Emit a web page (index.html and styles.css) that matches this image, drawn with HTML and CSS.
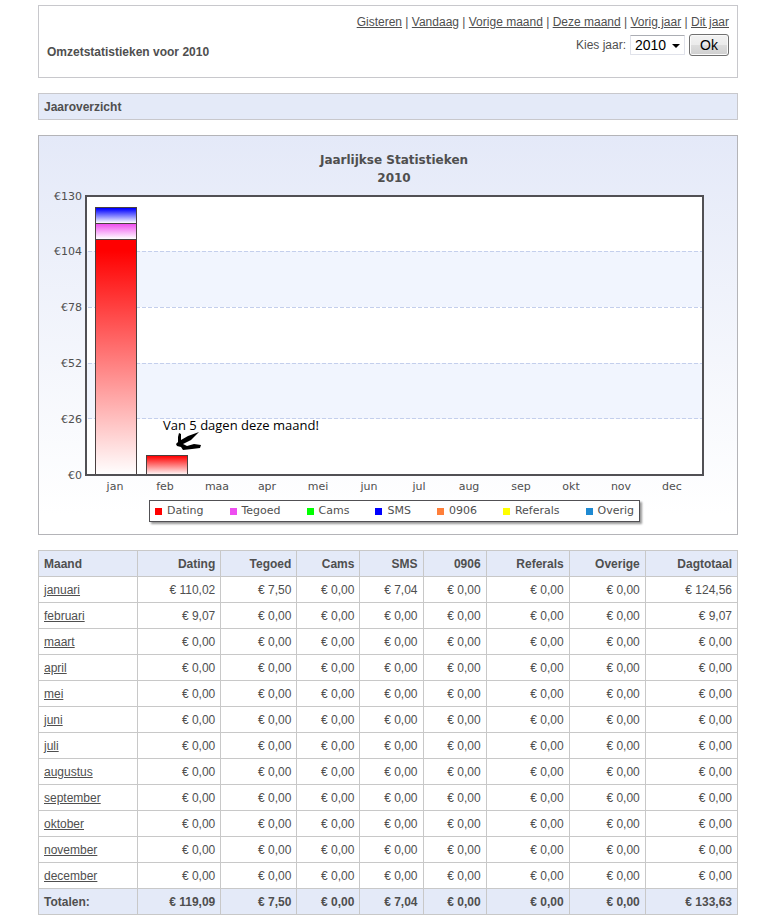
FILE: index.html
```html
<!DOCTYPE html>
<html lang="nl">
<head>
    <meta charset="UTF-8">
    <meta name="viewport" content="width=device-width, initial-scale=1.0">
    <title>Omzetstatistieken</title>
    <link rel="stylesheet" href="styles.css">
</head>
<body>
    <div class="page">
        <header class="top">
            <nav class="periods">
                <a href="#">Gisteren</a> | <a href="#">Vandaag</a> | <a href="#">Vorige maand</a> | <a href="#">Deze maand</a> | <a href="#">Vorig jaar</a> | <a href="#">Dit jaar</a>
            </nav>
            <div class="top-row">
                <h1>Omzetstatistieken voor 2010</h1>
                <form class="year-form">
                    <label for="year">Kies jaar:</label>
                    <span class="select-wrap">
                        <select id="year">
                            <option>2009</option>
                            <option selected>2010</option>
                        </select>
                        <svg class="caret" width="8" height="4" viewBox="0 0 8 4" aria-hidden="true"><path d="M0 0h8L4 4z"/></svg>
                    </span>
                    <button type="button">Ok</button>
                </form>
            </div>
        </header>

        <h2 class="section-title">Jaaroverzicht</h2>

        <section class="chart">
            <h3>Jaarlijkse Statistieken<br>2010</h3>
            <svg class="plot" viewBox="0 0 698 308">
                <defs>
                    <linearGradient id="red" x2="0" y2="1"><stop offset="5%" stop-color="#f00"/><stop offset="1" stop-color="#fff"/></linearGradient>
                    <linearGradient id="pink" x2="0" y2="1"><stop offset="0" stop-color="#ee44ee"/><stop offset="1" stop-color="#fff"/></linearGradient>
                    <linearGradient id="blue" x2="0" y2="1"><stop offset="10%" stop-color="#00f"/><stop offset="1" stop-color="#fff"/></linearGradient>
                </defs>
                <rect class="plot-bg" x="47" y="9" width="617" height="279"/>
                <rect class="band" x="47" y="64" width="617" height="56"/>
                <rect class="band" x="47" y="176" width="617" height="56"/>
                <g class="grid">
                    <path d="M49 64H663M49 120H663M49 176H663M49 231H663"/>
                </g>
                <g class="bars">
                    <rect x="56" y="20" width="41" height="16" fill="url(#blue)"/>
                    <rect x="56" y="36" width="41" height="16" fill="url(#pink)"/>
                    <rect x="56" y="52" width="41" height="236" fill="url(#red)"/>
                    <rect x="107" y="268" width="41" height="20" fill="url(#red)"/>
                </g>
                <rect class="frame" x="47" y="9" width="617" height="279"/>
                <g class="y-labels">
                    <text x="43" y="13">€130</text>
                    <text x="43" y="68">€104</text>
                    <text x="43" y="124">€78</text>
                    <text x="43" y="180">€52</text>
                    <text x="43" y="236">€26</text>
                    <text x="43" y="292">€0</text>
                </g>
                <g class="x-labels">
                    <text x="76" y="303">jan</text>
                    <text x="126" y="303">feb</text>
                    <text x="178" y="303">maa</text>
                    <text x="228" y="303">apr</text>
                    <text x="279" y="303">mei</text>
                    <text x="330" y="303">jun</text>
                    <text x="380" y="303">jul</text>
                    <text x="430" y="303">aug</text>
                    <text x="482" y="303">sep</text>
                    <text x="532" y="303">okt</text>
                    <text x="582" y="303">nov</text>
                    <text x="633" y="303">dec</text>
                </g>
                <text class="note" x="124" y="243">Van 5 dagen deze maand!</text>
                <path class="arrow" d="M160 245L152 253L144 257L148 259L155 257L162 258L161 261L153 262L144 263L142 260L138 259L137 257L139 255L139 250L140 246L142 247L142 253L149 249Z"/>
            </svg>
            <ul class="legend">
                <li><i class="dating"></i>Dating</li>
                <li><i class="tegoed"></i>Tegoed</li>
                <li><i class="cams"></i>Cams</li>
                <li><i class="sms"></i>SMS</li>
                <li><i class="n0906"></i>0906</li>
                <li><i class="referals"></i>Referals</li>
                <li><i class="overig"></i>Overig</li>
            </ul>
        </section>

        <table class="stats">
            <colgroup>
                <col class="c-month"><col class="c-wide"><col class="c-mid"><col class="c-small"><col class="c-small"><col class="c-small"><col class="c-wide"><col class="c-mid"><col class="c-total">
            </colgroup>
            <thead>
                <tr><th>Maand</th><th>Dating</th><th>Tegoed</th><th>Cams</th><th>SMS</th><th>0906</th><th>Referals</th><th>Overige</th><th>Dagtotaal</th></tr>
            </thead>
            <tbody>
                <tr><td><a href="#">januari</a></td><td>€ 110,02</td><td>€ 7,50</td><td>€ 0,00</td><td>€ 7,04</td><td>€ 0,00</td><td>€ 0,00</td><td>€ 0,00</td><td>€ 124,56</td></tr>
                <tr><td><a href="#">februari</a></td><td>€ 9,07</td><td>€ 0,00</td><td>€ 0,00</td><td>€ 0,00</td><td>€ 0,00</td><td>€ 0,00</td><td>€ 0,00</td><td>€ 9,07</td></tr>
                <tr><td><a href="#">maart</a></td><td>€ 0,00</td><td>€ 0,00</td><td>€ 0,00</td><td>€ 0,00</td><td>€ 0,00</td><td>€ 0,00</td><td>€ 0,00</td><td>€ 0,00</td></tr>
                <tr><td><a href="#">april</a></td><td>€ 0,00</td><td>€ 0,00</td><td>€ 0,00</td><td>€ 0,00</td><td>€ 0,00</td><td>€ 0,00</td><td>€ 0,00</td><td>€ 0,00</td></tr>
                <tr><td><a href="#">mei</a></td><td>€ 0,00</td><td>€ 0,00</td><td>€ 0,00</td><td>€ 0,00</td><td>€ 0,00</td><td>€ 0,00</td><td>€ 0,00</td><td>€ 0,00</td></tr>
                <tr><td><a href="#">juni</a></td><td>€ 0,00</td><td>€ 0,00</td><td>€ 0,00</td><td>€ 0,00</td><td>€ 0,00</td><td>€ 0,00</td><td>€ 0,00</td><td>€ 0,00</td></tr>
                <tr><td><a href="#">juli</a></td><td>€ 0,00</td><td>€ 0,00</td><td>€ 0,00</td><td>€ 0,00</td><td>€ 0,00</td><td>€ 0,00</td><td>€ 0,00</td><td>€ 0,00</td></tr>
                <tr><td><a href="#">augustus</a></td><td>€ 0,00</td><td>€ 0,00</td><td>€ 0,00</td><td>€ 0,00</td><td>€ 0,00</td><td>€ 0,00</td><td>€ 0,00</td><td>€ 0,00</td></tr>
                <tr><td><a href="#">september</a></td><td>€ 0,00</td><td>€ 0,00</td><td>€ 0,00</td><td>€ 0,00</td><td>€ 0,00</td><td>€ 0,00</td><td>€ 0,00</td><td>€ 0,00</td></tr>
                <tr><td><a href="#">oktober</a></td><td>€ 0,00</td><td>€ 0,00</td><td>€ 0,00</td><td>€ 0,00</td><td>€ 0,00</td><td>€ 0,00</td><td>€ 0,00</td><td>€ 0,00</td></tr>
                <tr><td><a href="#">november</a></td><td>€ 0,00</td><td>€ 0,00</td><td>€ 0,00</td><td>€ 0,00</td><td>€ 0,00</td><td>€ 0,00</td><td>€ 0,00</td><td>€ 0,00</td></tr>
                <tr><td><a href="#">december</a></td><td>€ 0,00</td><td>€ 0,00</td><td>€ 0,00</td><td>€ 0,00</td><td>€ 0,00</td><td>€ 0,00</td><td>€ 0,00</td><td>€ 0,00</td></tr>
            </tbody>
            <tfoot>
                <tr><th>Totalen:</th><td>€ 119,09</td><td>€ 7,50</td><td>€ 0,00</td><td>€ 7,04</td><td>€ 0,00</td><td>€ 0,00</td><td>€ 0,00</td><td>€ 133,63</td></tr>
            </tfoot>
        </table>
    </div>
</body>
</html>
```
FILE: styles.css
```css
* {
    box-sizing: border-box;
}

body {
    margin: 0;
    background: #fff;
    color: #4f4f4f;
    font: 12px/16px "Liberation Sans", Arial, sans-serif;
}

.page {
    display: flex;
    flex-direction: column;
    gap: 15px;
    padding: 5px 34px 8px 38px;
}

h1, h2, h3 {
    margin: 0;
    font-size: 12px;
}

a {
    color: inherit;
}

.top {
    padding: 8px;
    padding-bottom: 17px;
    border: 1px solid #c8c8cc;
}

.periods {
    text-align: right;
}

.top-row {
    display: flex;
    justify-content: space-between;
    align-items: flex-end;
    padding-top: 4px;
}

.year-form {
    display: flex;
    align-items: center;
    gap: 4px;
    margin-bottom: 4px;
}

.select-wrap {
    position: relative;
}

.year-form select {
    display: block;
    width: 55px;
    height: 20px;
    padding: 0 4px;
    border: 1px solid #e0e2ea;
    border-top-color: #abadb3;
    border-radius: 1px;
    background: #fff;
    color: #000;
    font: 14px "Liberation Sans", Arial, sans-serif;
    appearance: none;
}

.caret {
    position: absolute;
    right: 5px;
    top: 9px;
}

.year-form button {
    width: 40px;
    height: 22px;
    padding: 0;
    border: 1px solid #707070;
    border-radius: 3px;
    box-shadow: inset 0 0 0 1px #fafafa;
    background: linear-gradient(#f2f2f2, #ebebeb 50%, #dddddd 50%, #cfcfcf);
    color: #000;
    font: 14px "Liberation Sans", Arial, sans-serif;
}

.section-title {
    padding: 5px;
    padding-bottom: 4px;
    border: 1px solid #c8c8cc;
    background: #e4eaf8;
    line-height: 16px;
}

.chart {
    display: flex;
    flex-direction: column;
    align-items: center;
    padding: 15px 0 12px;
    border: 1px solid #b4b4b8;
    background: linear-gradient(#e4e9f8, #fff 95%);
    font-family: "DejaVu Sans", Verdana, sans-serif;
}

.chart h3 {
    padding-left: 12px;
    line-height: 18px;
    text-align: center;
}

.plot {
    display: block;
    width: 100%;
    font-size: 11px;
    fill: #4f4f4f;
}

.plot rect, .grid {
    shape-rendering: crispEdges;
}

.plot-bg {
    fill: #fff;
}

.plot .band {
    fill: #f1f5fe;
}

.grid {
    stroke: #c4cfec;
    stroke-dasharray: 4 2;
}

.bars {
    stroke: #4a4040;
}

.frame {
    fill: none;
    stroke: #515054;
    stroke-width: 2px;
}

.y-labels {
    text-anchor: end;
}

.x-labels {
    text-anchor: middle;
}

.note {
    fill: #000;
    font: 13px "Open Sans", "Noto Sans", sans-serif;
}

.arrow {
    fill: #000;
}

.legend {
    display: flex;
    gap: 26px;
    margin: 5px 0 0 13px;
    padding: 2px 5px;
    border: 1px solid #515054;
    box-shadow: 2px 2px 2px #999;
    background: #fff;
    font-size: 11px;
    list-style: none;
}

.legend li {
    display: flex;
    align-items: center;
    gap: 5px;
}

.legend i {
    width: 7px;
    height: 7px;
}

.dating { background: #f00; }
.tegoed { background: #ee4ef0; }
.cams { background: #0f0; }
.sms { background: #00f; }
.n0906 { background: #ff7f3a; }
.referals { background: #ff0; }
.overig { background: #1f8ad2; }

.stats {
    width: 100%;
    border-collapse: collapse;
    table-layout: fixed;
    text-align: right;
}

.stats th, .stats td {
    height: 26px;
    padding: 0 5px;
    border: 1px solid #c8c8c8;
}

.stats th:first-child, .stats td:first-child {
    text-align: left;
}

.stats thead, .stats tfoot {
    background: #e4eaf8;
    font-weight: bold;
}

.c-month { width: 99px; }
.c-wide { width: 83px; }
.c-mid { width: 76px; }
.c-small { width: 63px; }
.c-total { width: 92px; }
```
